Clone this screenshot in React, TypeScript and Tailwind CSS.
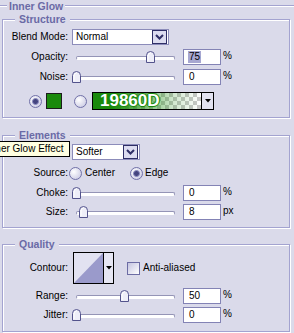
import React from 'react';

interface RowProps {
    label: string;
    pos: number;
    value: string;
    unit: string;
    selected?: boolean;
    className?: string;
}

const Label: React.FC<{ children: React.ReactNode }> = ({ children }) => (
    <div className="w-[65px] shrink-0 text-right">{children}</div>
);

const Thumb: React.FC<{ left: number }> = ({ left }) => (
    <svg className="absolute top-0" style={{ left }} width="9" height="12" viewBox="0 0 9 12">
        <path d="M0.5 11.5 V4.5 Q0.5 0.5 4.5 0.5 Q8.5 0.5 8.5 4.5 V11.5 Z" fill="#eeeef8" stroke="#53538c" />
        <path d="M2 10 V5 Q2 2.5 4.5 2" fill="none" stroke="#ffffff" />
    </svg>
);

const Slider: React.FC<{ pos: number }> = ({ pos }) => (
    <div className="relative h-[12px] w-[104px]">
        <div className="absolute left-[4px] right-[1px] top-[5px] h-[4px] rounded-full border border-[#9494b6] border-b-white bg-white" />
        <Thumb left={pos} />
    </div>
);

const Field: React.FC<{ value: string; unit: string; selected?: boolean }> = ({ value, unit, selected }) => (
    <div className="ml-[7px] flex items-center">
        <div className="flex h-[16px] w-[38px] items-center border border-[#8383b5] bg-white pl-[4px]">
            <span className={selected ? 'bg-[#a7a7d1] px-[1px]' : 'px-[1px]'}>{value}</span>
        </div>
        <span className="-mt-[3px] ml-[2px]">{unit}</span>
    </div>
);

const SliderRow: React.FC<RowProps> = ({ label, pos, value, unit, selected, className }) => (
    <div className={`flex h-[16px] items-center ${className ?? ''}`}>
        <Label>{label}</Label>
        <div className="ml-[4px]">
            <Slider pos={pos} />
        </div>
        <Field value={value} unit={unit} selected={selected} />
    </div>
);

const Select: React.FC<{ value: string; className: string }> = ({ value, className }) => (
    <div className={`flex h-[16px] items-center justify-between border border-[#8c8cba] bg-white pl-[3px] pr-[1px] ${className}`}>
        <span>{value}</span>
        <div className="flex h-[14px] w-[15px] items-center justify-center border border-[#2e2e66] bg-[#dcdcf0]">
            <svg width="9" height="6" viewBox="0 0 9 6">
                <path d="M1 1 L4.5 4.5 L8 1" fill="none" stroke="#2e2e66" strokeWidth="2" />
            </svg>
        </div>
    </div>
);

const Radio: React.FC<{ checked?: boolean }> = ({ checked }) => (
    <div className="flex h-[13px] w-[13px] shrink-0 items-center justify-center rounded-full border border-[#7171a8] bg-[radial-gradient(circle_at_35%_35%,#ffffff,#c2c2df)]">
        {checked && <div className="h-[7px] w-[7px] rounded-full border border-[#8a8ac0] bg-[#44447f]" />}
    </div>
);

const Group: React.FC<{ title: string; className: string; children: React.ReactNode }> = ({ title, className, children }) => (
    <fieldset className={`ml-[2px] w-[288px] border border-[#a3a3d0] shadow-[1px_1px_0_#ffffff,inset_1px_1px_0_#ffffff] ${className}`}>
        <legend className="ml-[12px] bg-[#dadaea] px-[4px] text-[10.5px] font-bold leading-[13px] text-[#6a6aa6]">{title}</legend>
        {children}
    </fieldset>
);

const Arrow = () => (
    <svg width="6" height="4" viewBox="0 0 6 4">
        <path d="M0 0 H6 L3 3.5 Z" fill="#000000" />
    </svg>
);

export default function App() {
    return (
        <div className="relative h-[333px] w-[294px] overflow-hidden bg-[#dadaea] font-['Liberation_Sans',Arial,sans-serif] text-[10px] leading-[12px] text-black">
            {/* section heading */}
            <div className="flex h-[11px] items-center">
                <div className="h-[2px] w-[7px] border-t border-[#a3a3d0] bg-white" />
                <div className="px-[2px] text-[10.5px] font-bold text-[#6a6aa6]">Inner Glow</div>
                <div className="h-[2px] flex-1 border-t border-[#a3a3d0] bg-white" />
            </div>

            <Group title="Structure" className="mt-[2px] pb-[7px]">
                <div className="mt-[3px] flex h-[16px] items-center">
                    <Label>Blend Mode:</Label>
                    <div className="ml-[4px]">
                        <Select value="Normal" className="w-[97px]" />
                    </div>
                </div>
                <SliderRow className="mt-[4px]" label="Opacity:" pos={74} value="75" unit="%" selected />
                <SliderRow className="mt-[4px]" label="Noise:" pos={0} value="0" unit="%" />
                <div className="mt-[7px] flex h-[18px] items-center pl-[26px]">
                    <Radio checked />
                    <div className="ml-[4px] h-[16px] w-[16px] border border-[#1c1c1c] bg-[#1a8a0c]" />
                    <div className="ml-[12px]">
                        <Radio />
                    </div>
                    <div className="ml-[5px] flex h-[18px] w-[122px] border border-black">
                        <div className="flex flex-1 items-center bg-[linear-gradient(to_right,#1a8a0c_18%,rgba(26,138,12,0.2)_75%,rgba(26,138,12,0)),conic-gradient(#c9c9c9_25%,#ffffff_0_50%,#c9c9c9_0_75%,#ffffff_0)] bg-[length:100%_100%,8px_8px] pl-[7px]">
                            <span className="text-[17px] font-bold leading-[16px] text-white [text-shadow:1px_0_0_#1a8a0c,-1px_0_0_#1a8a0c,0_1px_0_#1a8a0c,0_-1px_0_#1a8a0c,0_0_2px_#1a8a0c]">
                                19860D
                            </span>
                        </div>
                        <div className="flex w-[12px] items-center justify-center border-l border-black bg-[#e2e2f0]">
                            <Arrow />
                        </div>
                    </div>
                </div>
            </Group>

            <Group title="Elements" className="mt-[11px] pb-[7px]">
                <div className="mt-[2px] flex h-[16px] items-center">
                    <Label>Technique:</Label>
                    <div className="ml-[4px]">
                        <Select value="Softer" className="w-[68px]" />
                    </div>
                </div>
                <div className="mt-[6px] flex h-[14px] items-center">
                    <Label>Source:</Label>
                    <div className="ml-[1px]">
                        <Radio />
                    </div>
                    <span className="ml-[3px]">Center</span>
                    <div className="ml-[15px]">
                        <Radio checked />
                    </div>
                    <span className="ml-[2px]">Edge</span>
                </div>
                <SliderRow className="mt-[5px]" label="Choke:" pos={0} value="0" unit="%" />
                <SliderRow className="mt-[3px]" label="Size:" pos={7} value="8" unit="px" />
            </Group>

            <Group title="Quality" className="mt-[10px] pb-[8px]">
                <div className="mt-[1px] flex h-[32px] items-center">
                    <Label>Contour:</Label>
                    <div className="ml-[5px] flex h-[32px] w-[41px] border border-black">
                        <svg width="29" height="30" viewBox="0 0 29 30">
                            <rect width="29" height="30" fill="#e2e2f1" />
                            <polygon points="0,30 29,0 29,30" fill="#9a9acb" />
                        </svg>
                        <div className="flex flex-1 items-center justify-center border-l border-black bg-[#e6e6f3]">
                            <Arrow />
                        </div>
                    </div>
                    <div className="ml-[13px] h-[13px] w-[13px] border border-[#6c6ca4] bg-[linear-gradient(135deg,#c4c4e0,#ffffff)]" />
                    <span className="ml-[3px]">Anti-aliased</span>
                </div>
                <SliderRow className="mt-[4px]" label="Range:" pos={48} value="50" unit="%" />
                <SliderRow className="mt-[3px]" label="Jitter:" pos={0} value="0" unit="%" />
            </Group>

            {/* tooltip over the Technique label */}
            <div className="absolute left-[-18px] top-[141px] flex h-[16px] w-[88px] items-center border border-black bg-[#ffffe1] pl-[4px] text-[10px]">
                Inner Glow Effect
            </div>
        </div>
    );
}
